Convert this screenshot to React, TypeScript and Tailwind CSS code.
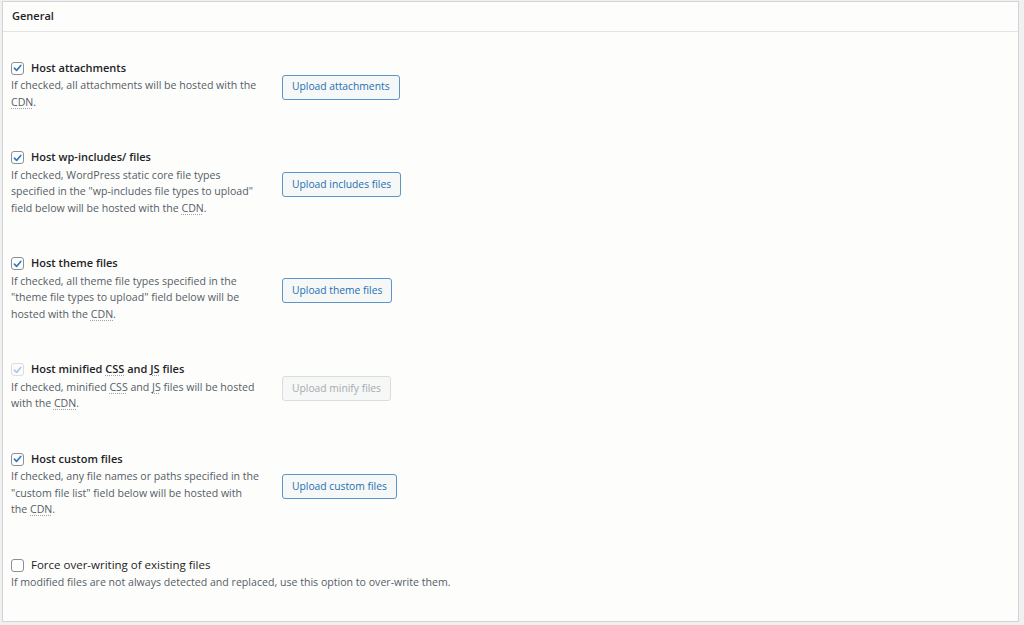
import React from "react";

const Abbr = ({ children }: { children: React.ReactNode }) => (
  <span className="underline decoration-dotted decoration-[#a0a3a8] underline-offset-2">{children}</span>
);

const Check = ({ checked, disabled }: { checked: boolean; disabled?: boolean }) => (
  <span
    className={
      "flex h-[13px] w-[13px] shrink-0 items-center justify-center rounded-[3px] border " +
      (disabled ? "border-[#dcdcde] bg-[#fcfcfc]" : "border-[#8c8f94] bg-white")
    }
  >
    {checked && (
      <svg viewBox="0 0 12 12" className="h-[12px] w-[12px]">
        <path
          d="M2.6 6.2 L5 8.6 L9.6 3.2"
          fill="none"
          stroke={disabled ? "#a9c9e6" : "#2f7dc0"}
          strokeWidth="1.8"
          strokeLinecap="round"
          strokeLinejoin="round"
        />
      </svg>
    )}
  </span>
);

type Row = {
  label: React.ReactNode;
  desc: React.ReactNode;
  button: string;
  checked: boolean;
  disabled?: boolean;
};

const rows: Row[] = [
  {
    label: "Host attachments",
    desc: (
      <>
        If checked, all attachments will be hosted with the <Abbr>CDN</Abbr>.
      </>
    ),
    button: "Upload attachments",
    checked: true,
  },
  {
    label: "Host wp-includes/ files",
    desc: (
      <>
        If checked, WordPress static core file types specified in the "wp-includes file types to upload" field below will
        be hosted with the <Abbr>CDN</Abbr>.
      </>
    ),
    button: "Upload includes files",
    checked: true,
  },
  {
    label: "Host theme files",
    desc: (
      <>
        If checked, all theme file types specified in the "theme file types to upload" field below will be hosted with
        the <Abbr>CDN</Abbr>.
      </>
    ),
    button: "Upload theme files",
    checked: true,
  },
  {
    label: (
      <>
        Host minified <Abbr>CSS</Abbr> and <Abbr>JS</Abbr> files
      </>
    ),
    desc: (
      <>
        If checked, minified <Abbr>CSS</Abbr> and <Abbr>JS</Abbr> files will be hosted with the <Abbr>CDN</Abbr>.
      </>
    ),
    button: "Upload minify files",
    checked: true,
    disabled: true,
  },
  {
    label: "Host custom files",
    desc: (
      <>
        If checked, any file names or paths specified in the "custom file list" field below will be hosted with the{" "}
        <Abbr>CDN</Abbr>.
      </>
    ),
    button: "Upload custom files",
    checked: true,
  },
];

export default function App() {
  return (
    <div
      className="h-[625px] w-[1024px] bg-[#f0f0f1] pl-[2px] pr-[5px] pt-[1px] pb-[3px]"
      style={{ fontFamily: '"Open Sans", "Noto Sans", sans-serif' }}
    >
      <div className="flex h-full flex-col border border-[#d2d3d6] bg-[#fdfdfc]">
        <div className="flex h-[30px] items-center border-b border-[#e2e3e5] pl-[9px] text-[11px] font-semibold text-[#1d2327]">
          General
        </div>
        <div className="flex flex-col gap-[38.5px] pl-[8px] pt-[27px]">
          {rows.map((r, i) => (
            <div key={i} className="flex items-center">
              <div className="w-[249px] shrink-0">
                <div className="flex h-[18px] items-center gap-[7px]">
                  <Check checked={r.checked} disabled={r.disabled} />
                  <span className="whitespace-nowrap text-[11px] font-semibold text-[#1d2327]">{r.label}</span>
                </div>
                <div className="text-[10.6px] leading-[16.5px] text-[#555d66]">{r.desc}</div>
              </div>
              <button
                className={
                  "ml-[22px] mt-[5px] h-[25px] rounded-[3px] border px-[9px] text-[10.3px] " +
                  (r.disabled
                    ? "border-[#dcdcde] bg-[#f6f7f7] text-[#a7aaad]"
                    : "border-[#5b95c9] bg-[#f6f7f7] text-[#2271b1]")
                }
              >
                {r.button}
              </button>
            </div>
          ))}
          <div>
            <div className="flex h-[18px] items-center gap-[7px]">
              <Check checked={false} />
              <span className="text-[11.5px] font-medium text-[#1d2327]">Force over-writing of existing files</span>
            </div>
            <div className="text-[10.6px] leading-[16.5px] text-[#555d66]">
              If modified files are not always detected and replaced, use this option to over-write them.
            </div>
          </div>
        </div>
      </div>
    </div>
  );
}
